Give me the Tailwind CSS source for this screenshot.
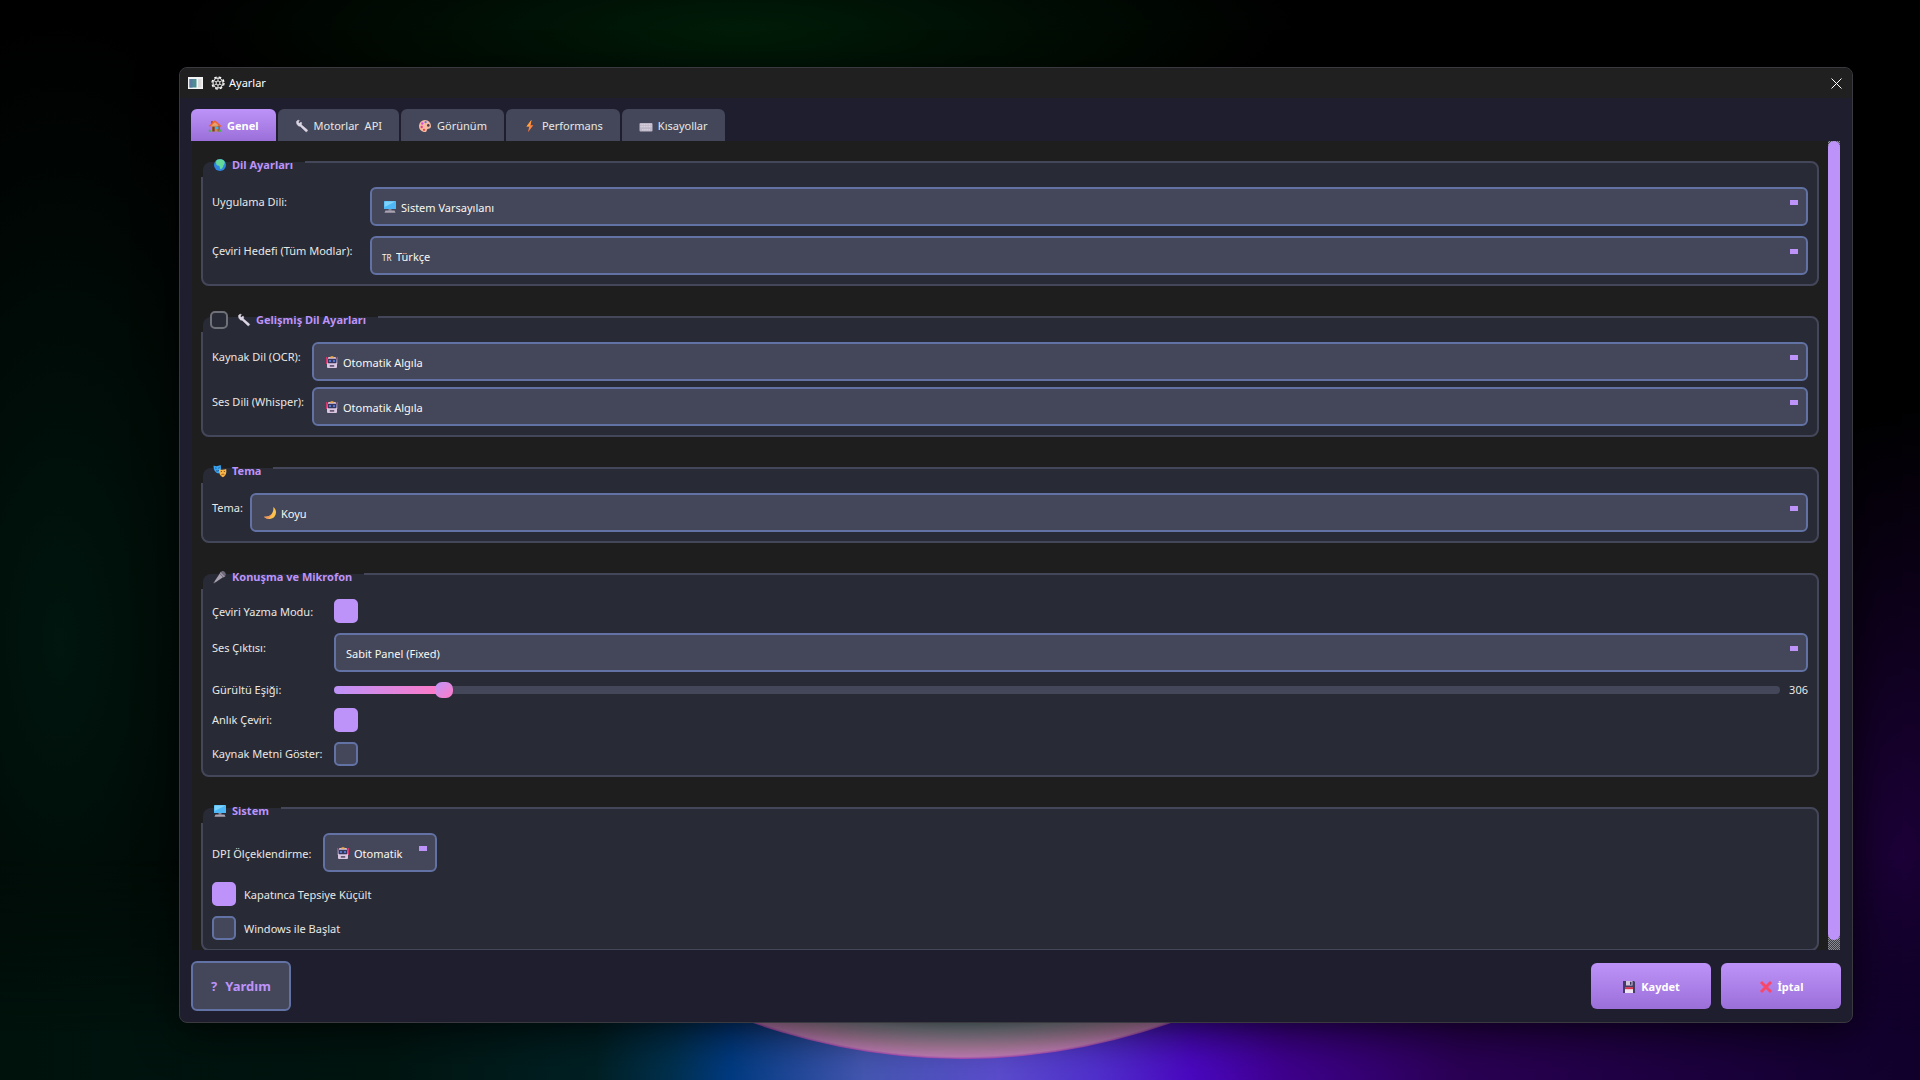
<!DOCTYPE html>
<html lang="tr">
  <head>
    <meta charset="UTF-8" />
    <meta name="viewport" content="width=device-width, initial-scale=1" />
    <title>Ayarlar</title>
    <script src="https://cdn.jsdelivr.net/npm/@tailwindcss/browser@4"></script>
  </head>
  <body
    class="relative h-screen overflow-hidden bg-black pt-[67px] pr-[67px] pb-[57px] pl-[179px] font-['Noto_Sans','Open_Sans',sans-serif] text-[11px] text-[#e8e8e4]"
  >
    <!-- Desktop wallpaper -->
    <svg
      class="absolute inset-0 h-full w-full"
      viewBox="0 0 1920 1080"
      preserveAspectRatio="xMidYMid slice"
      aria-hidden="true"
    >
      <defs>
        <radialGradient id="green"><stop offset="0" stop-color="#00160e" /><stop offset="1" stop-color="#00160e" stop-opacity="0" /></radialGradient>
        <radialGradient id="topGreen"><stop offset="0" stop-color="#001c08" /><stop offset="1" stop-color="#001c08" stop-opacity="0" /></radialGradient>
        <radialGradient id="purple"><stop offset="0" stop-color="#1c0038" /><stop offset="1" stop-color="#1c0038" stop-opacity="0" /></radialGradient>
        <linearGradient id="floor" x1="0" x2="1" y1="0" y2="0">
          <stop offset="0" stop-color="#00120c" />
          <stop offset="0.2" stop-color="#001510" />
          <stop offset="0.31" stop-color="#002024" />
          <stop offset="0.35" stop-color="#00304e" />
          <stop offset="0.38" stop-color="#003a80" />
          <stop offset="0.45" stop-color="#4456b0" />
          <stop offset="0.52" stop-color="#5a4ccc" />
          <stop offset="0.57" stop-color="#5030cc" />
          <stop offset="0.62" stop-color="#4a08c0" />
          <stop offset="0.67" stop-color="#3e008c" />
          <stop offset="0.76" stop-color="#2a0054" />
          <stop offset="0.88" stop-color="#1c003e" />
          <stop offset="1" stop-color="#10002a" />
        </linearGradient>
        <linearGradient id="floorFade" x1="0" x2="0" y1="0" y2="1">
          <stop offset="0" stop-color="#000" />
          <stop offset="0.8" stop-color="#fff" />
        </linearGradient>
        <mask id="floorMask"><rect y="860" width="1920" height="220" fill="url(#floorFade)" /></mask>
        <radialGradient id="planet" gradientUnits="userSpaceOnUse" cx="962" cy="433" r="626">
          <stop offset="0.93" stop-color="#5c7c7c" />
          <stop offset="0.955" stop-color="#8c8c98" />
          <stop offset="0.98" stop-color="#b284a4" />
          <stop offset="0.996" stop-color="#c480b8" />
          <stop offset="1" stop-color="#a848b8" />
        </radialGradient>
      </defs>
      <ellipse cx="60" cy="640" rx="260" ry="620" fill="url(#green)" />
      <ellipse cx="740" cy="30" rx="560" ry="120" fill="url(#topGreen)" />
      <ellipse cx="1900" cy="860" rx="220" ry="460" fill="url(#purple)" />
      <rect y="860" width="1920" height="220" fill="url(#floor)" mask="url(#floorMask)" />
      <path d="M336 433a626 626 0 0 0 1252 0z" fill="url(#planet)" />
    </svg>

    <!-- Shared icons -->
    <svg class="hidden" aria-hidden="true">
      <symbol id="i-house" viewBox="0 0 14 14">
        <path d="M3 6h8.5v6.5H3z" fill="#c98a5a" /><path d="M9.5 6h2.5v6.5H9.5z" fill="#9a6240" />
        <path d="M3 2h2v4H3z" fill="#b0522f" />
        <path d="M7 1.2 13.3 7l-1 1L7 3.4 1.7 8l-1-1z" fill="#f2612e" /><path d="M7 3.2 11 6.7H3z" fill="#e9a06a" />
        <path d="M4.3 7.8h2.4v4.7H4.3z" fill="#7a3e28" /><path d="M8 7.8h2.3V10H8z" fill="#35b5f0" />
        <path d="M.8 10.8c1-.8 2 0 2.2 1.9H.8zM10.7 12.7c.2-2 1.6-2.6 2.5-1.7v1.7z" fill="#3fb54a" />
      </symbol>
      <symbol id="i-wrench" viewBox="0 0 14 14">
        <path d="M1.500 3.800C1 1.800 3 .800 4.300 1.400L3.300 3.200l1.200 1 1.600-1.100c.9 1.100.6 2.200.3 2.700l5.900 5c.9.800-.6 2.600-1.600 1.700L5.100 7.200C3.300 7.600 1.800 5.600 1.500 3.800z" fill="#dcd6e4" stroke="#dcd6e4" stroke-width=".5" />
      </symbol>
      <symbol id="i-palette" viewBox="0 0 14 14">
        <path d="M7 1a6 6 0 0 0-6 6c0 3.500 2.700 6 6 6 2 0 1.500-2 2.300-2.800.9-.8 3.700.2 3.700-3.200a6 6 0 0 0-6-6z" fill="#f7b9a0" />
        <circle cx="3.700" cy="8" r="1.200" fill="#e0418a" /><circle cx="4.300" cy="4.500" r="1.200" fill="#d84fe0" />
        <circle cx="7.600" cy="3.200" r="1.100" fill="#4f7bf0" /><circle cx="6" cy="10.800" r="1.100" fill="#e8453c" />
        <circle cx="10.300" cy="6.400" r="1.300" fill="#4a3a4c" />
      </symbol>
      <symbol id="i-bolt" viewBox="0 0 14 14">
        <path d="M8.600.800 3.500 7.600h2.700L5 13.300l5.300-7.100H7.600z" fill="#ff7f3d" /><path d="M8.600.800 3.500 7.600h2.700l.7-1.400z" fill="#ffa53b" />
      </symbol>
      <symbol id="i-keyboard" viewBox="0 0 14 14">
        <rect x=".5" y="4" width="13" height="8.500" rx="1" fill="#bdb6c6" />
        <path d="M1.500 5.700h11M1.500 7.700h11M3 10.800h8" stroke="#e0dae6" stroke-width="1" stroke-dasharray="1.200 .5" />
      </symbol>
      <symbol id="i-globe" viewBox="0 0 14 14">
        <circle cx="7" cy="7" r="6" fill="#2f86e0" />
        <path d="M4 1.800C6 .800 9 .900 10.800 2.400c1 1.500 1.400 2.800.2 4-.7.700-.5 1.700-1.100 2.700-.6 1.200-1.600 2.300-2.400 2-1-.4-.5-2.200-1.100-3C5.600 7.300 4 7.600 3.400 6.400c-.6-1.300-.6-3.400.6-4.600z" fill="#62d89a" />
      </symbol>
      <symbol id="i-monitor" viewBox="0 0 14 14">
        <rect x="1" y="1" width="12" height="8" rx=".6" fill="#4db8f5" /><path d="M1.600 1.600h10.800L1.600 7z" fill="#7fd3fb" />
        <path d="M5.500 9h3v1.700h-3z" fill="#8a8394" /><path d="M2.500 10.500h9l1 2.200h-11z" fill="#a9a2b2" />
      </symbol>
      <symbol id="i-robot" viewBox="0 0 14 14">
        <path d="M1.600 2v7M12.400 2v7" stroke="#d8356c" stroke-width="1.200" />
        <path d="M3.500 2h7l1.500 3.300V12a1 1 0 0 1-1 1H3a1 1 0 0 1-1-1V5.300z" fill="#d9c6e0" />
        <path d="M4.500 2.800C4.800.6 9.200.6 9.500 2.800z" fill="#f0a63c" />
        <rect x="2.500" y="3.700" width="9" height="4.600" rx="1" fill="#37365c" />
        <circle cx="5" cy="6" r="1" fill="#5d8df0" /><circle cx="9" cy="6" r="1" fill="#5d8df0" />
        <path d="M4.800 10.200h4.400v1.400H4.800z" fill="#4b3c5a" />
      </symbol>
      <symbol id="i-masks" viewBox="0 0 14 14">
        <path d="M.6 1.600c2.300.9 4.700.7 7-.6.8 3.500.6 7-2.400 8.600C2 8.800.4 5.400.600 1.600z" fill="#3aa5f2" />
        <path d="m2.200 4 1.300.3M5.300 4.200l1.200-.6M3 6.600c1 .7 2 .5 3-.4" stroke="#1a4f86" stroke-width=".9" fill="none" />
        <path d="M6.200 5.200c2.400.9 4.700.8 7-.2.7 3.800-.3 6.800-3.300 8.300-3-1.300-4.300-4.300-3.700-8.100z" fill="#f7b548" />
        <path d="m7.700 7.700 1.300-.3M10.800 7.400l1.300.2M8.300 11c.9-1 2.200-1 3.100-.2" stroke="#8a4b1c" stroke-width=".9" fill="none" />
      </symbol>
      <symbol id="i-moon" viewBox="0 0 14 14">
        <path d="M10.200 1c3 2 3.700 6.200 1.600 9.200-2.400 3.300-7.600 3.700-10.800.500 3.300.3 6.300-.7 7.800-2.900C10.200 5.700 10.700 3.300 10.200 1z" fill="#fbc24e" />
        <path d="M1 10.700c3.300.3 6.300-.7 7.800-2.900-.8 2.700-2.500 4.300-4 4.800-1.300-.3-2.700-.8-3.800-1.900z" fill="#f3925a" />
      </symbol>
      <symbol id="i-mic" viewBox="0 0 14 14">
        <path d="M8 1.500 12.500 6l-2 1.500-4-4z" fill="#9b93a3" /><path d="M8.800 1.200c1.600-1 4.700 1.700 3.900 3.900L11.500 6 8 2.600z" fill="#6e6878" />
        <path d="M6.600 3.800 10 7.200 2.300 12.600 1.300 11.700z" fill="#a8a1b0" /><path d="m1.800 12.100-1.100 1" stroke="#7d7686" stroke-width="1.100" />
      </symbol>
      <symbol id="i-floppy" viewBox="0 0 14 14">
        <path d="M1 1h11l1 1v11H1z" fill="#443a66" /><path d="M4 1h6.500v4.500H4z" fill="#cfc6dc" /><path d="M8 1.700h1.500v3H8z" fill="#3a3158" />
        <path d="M3 7.500h8V13H3z" fill="#efe6f4" /><path d="M3 7.200h8v2H3z" fill="#d8344c" />
      </symbol>
      <symbol id="i-cross" viewBox="0 0 14 14">
        <path d="m2 2 10 10M12 2 2 12" stroke="#f8486a" stroke-width="3" />
      </symbol>
    </svg>

    <div
      class="relative flex h-full flex-col overflow-hidden rounded-lg border border-[#39393f] bg-[#1e1e2e] shadow-[0_12px_40px_rgba(0,0,0,0.6)]"
    >
      <header class="flex h-[30px] shrink-0 items-center bg-[#202020] pr-[10px] pl-2 text-white">
        <svg class="h-3 w-[15px]" viewBox="0 0 15 12" aria-hidden="true">
          <rect width="15" height="12" fill="#f4f4f4" />
          <rect x="1.500" y="2" width="7" height="8.500" fill="#4d8f90" /><path d="M1.500 2h3v8.500h-3z" fill="#5b78a0" />
          <rect x="10" y="2" width="3.500" height="8.500" fill="#dcdcdc" />
        </svg>
        <svg class="ml-2 h-[14px] w-[14px]" viewBox="0 0 14 14" fill="none" stroke="#fff" aria-hidden="true">
          <circle cx="7" cy="7" r="5" />
          <circle cx="7" cy="7" r="2" stroke-width=".9" />
          <circle cx="7" cy="7" r="6" stroke-width="1.300" stroke-dasharray="2.600 2.112" />
          <path d="M7 2v3M7 9v3M2.700 4.500l2.600 1.500M8.700 8l2.600 1.500M11.300 4.500 8.700 6M5.300 8 2.700 9.500" stroke-width=".8" />
        </svg>
        <h1 class="ml-1">Ayarlar</h1>
        <button type="button" class="ml-auto" aria-label="Kapat">
          <svg class="h-[11px] w-[11px]" viewBox="0 0 11 11" stroke="#fff"><path d="m.5.5 10 10M10.500.5l-10 10" /></svg>
        </button>
      </header>

      <nav class="flex shrink-0 gap-[2px] px-[11px] pt-[11px]">
        <button type="button" class="flex h-8 items-center gap-[5px] rounded-t-md bg-linear-to-b from-[#bd93f9] to-[#9b6fd8] px-[17px] pt-[2px] font-bold text-white">
          <svg class="h-[14px] w-[14px]"><use href="#i-house" /></svg>Genel
        </button>
        <button type="button" class="flex h-8 items-center gap-[5px] rounded-t-md bg-[#44475a] px-[17px] pt-[2px] whitespace-pre">
          <svg class="h-[14px] w-[14px]"><use href="#i-wrench" /></svg>Motorlar  API</button>
        <button type="button" class="flex h-8 items-center gap-[5px] rounded-t-md bg-[#44475a] px-[17px] pt-[2px]">
          <svg class="h-[14px] w-[14px]"><use href="#i-palette" /></svg>Görünüm
        </button>
        <button type="button" class="flex h-8 items-center gap-[5px] rounded-t-md bg-[#44475a] px-[17px] pt-[2px]">
          <svg class="h-[14px] w-[14px]"><use href="#i-bolt" /></svg>Performans
        </button>
        <button type="button" class="flex h-8 items-center gap-[5px] rounded-t-md bg-[#44475a] px-[17px] pt-[2px]">
          <svg class="h-[14px] w-[14px]"><use href="#i-keyboard" /></svg>Kısayollar
        </button>
      </nav>

      <main class="mx-3 flex min-h-0 flex-1 overflow-hidden bg-[#1e1e1e]">
        <div class="flex flex-1 flex-col gap-[30px] px-[9px] pt-[20px]">
          <!-- Dil Ayarları -->
          <section class="shrink-0 rounded-lg border-2 border-[#44475a] bg-[#282a36] px-[9px] pb-[9px]">
            <h2 class="-mt-[2px] -ml-[11px] h-4 w-fit bg-[#1e1e1e] pt-px pl-[2px] font-bold text-[#bd93f9]">
              <span class="flex h-[15px] items-start rounded-tl-lg bg-[#282a36] pr-3 pl-[10px]">
                <span class="flex h-[6px] items-center gap-[5px]">
                  <svg class="h-[14px] w-[14px]"><use href="#i-globe" /></svg>Dil Ayarları
                </span>
              </span>
            </h2>
            <div class="mt-[10px] grid grid-cols-[158px_1fr] gap-y-[10px]">
              <label for="appLang" class="leading-[30px]">Uygulama Dili:</label>
              <div class="relative">
                <select id="appLang" class="h-[39px] w-full appearance-none rounded-md border-2 border-[#6272a4] bg-[#44475a] pt-[3px] pl-[29px] text-[#f8f8f2]">
                  <option>Sistem Varsayılanı</option>
                </select>
                <svg class="pointer-events-none absolute top-[13px] left-[13px] h-[14px] w-[14px]"><use href="#i-monitor" /></svg>
                <span class="pointer-events-none absolute top-[13px] right-[10px] h-[5px] w-2 bg-[#bd93f9]"></span>
              </div>
              <label for="targetLang" class="leading-[30px]">Çeviri Hedefi (Tüm Modlar):</label>
              <div class="relative">
                <select id="targetLang" class="h-[39px] w-full appearance-none rounded-md border-2 border-[#6272a4] bg-[#44475a] pt-[3px] pl-6 text-[#f8f8f2]">
                  <option>Türkçe</option>
                </select>
                <span class="pointer-events-none absolute top-[14px] left-3 text-[8px] leading-[15px] text-[#f8f8f2]">TR</span>
                <span class="pointer-events-none absolute top-[13px] right-[10px] h-[5px] w-2 bg-[#bd93f9]"></span>
              </div>
            </div>
          </section>

          <!-- Gelişmiş Dil Ayarları -->
          <section class="shrink-0 rounded-lg border-2 border-[#44475a] bg-[#282a36] px-[9px] pb-[9px]">
            <h2 class="-mt-[2px] -ml-[11px] h-4 w-fit bg-[#1e1e1e] pt-px pl-[2px] font-bold text-[#bd93f9]">
              <span class="flex h-[15px] items-start rounded-tl-lg bg-[#282a36] pr-3 pl-[7px]">
                <label class="flex h-[6px] items-center gap-[5px]">
                  <input type="checkbox" class="mr-1 h-[18px] w-[18px] appearance-none rounded-[5px] border-2 border-[#707078] bg-[#282a36] checked:bg-[#bd93f9]" />
                  <svg class="h-[14px] w-[14px]"><use href="#i-wrench" /></svg>Gelişmiş Dil Ayarları
                </label>
              </span>
            </h2>
            <div class="mt-[10px] grid grid-cols-[100px_1fr] gap-y-[6px]">
              <label for="ocrLang" class="leading-[30px]">Kaynak Dil (OCR):</label>
              <div class="relative">
                <select id="ocrLang" class="h-[39px] w-full appearance-none rounded-md border-2 border-[#6272a4] bg-[#44475a] pt-[3px] pl-[29px] text-[#f8f8f2]">
                  <option>Otomatik Algıla</option>
                </select>
                <svg class="pointer-events-none absolute top-[13px] left-[13px] h-[14px] w-[14px]"><use href="#i-robot" /></svg>
                <span class="pointer-events-none absolute top-[13px] right-[10px] h-[5px] w-2 bg-[#bd93f9]"></span>
              </div>
              <label for="voiceLang" class="leading-[30px]">Ses Dili (Whisper):</label>
              <div class="relative">
                <select id="voiceLang" class="h-[39px] w-full appearance-none rounded-md border-2 border-[#6272a4] bg-[#44475a] pt-[3px] pl-[29px] text-[#f8f8f2]">
                  <option>Otomatik Algıla</option>
                </select>
                <svg class="pointer-events-none absolute top-[13px] left-[13px] h-[14px] w-[14px]"><use href="#i-robot" /></svg>
                <span class="pointer-events-none absolute top-[13px] right-[10px] h-[5px] w-2 bg-[#bd93f9]"></span>
              </div>
            </div>
          </section>

          <!-- Tema -->
          <section class="shrink-0 rounded-lg border-2 border-[#44475a] bg-[#282a36] px-[9px] pb-[9px]">
            <h2 class="-mt-[2px] -ml-[11px] h-4 w-fit bg-[#1e1e1e] pt-px pl-[2px] font-bold text-[#bd93f9]">
              <span class="flex h-[15px] items-start rounded-tl-lg bg-[#282a36] pr-3 pl-[10px]">
                <span class="flex h-[6px] items-center gap-[5px]">
                  <svg class="h-[14px] w-[14px]"><use href="#i-masks" /></svg>Tema
                </span>
              </span>
            </h2>
            <div class="mt-[10px] grid grid-cols-[38px_1fr]">
              <label for="theme" class="leading-[30px]">Tema:</label>
              <div class="relative">
                <select id="theme" class="h-[39px] w-full appearance-none rounded-md border-2 border-[#6272a4] bg-[#44475a] pt-[3px] pl-[29px] text-[#f8f8f2]">
                  <option>Koyu</option>
                </select>
                <svg class="pointer-events-none absolute top-[13px] left-[13px] h-[14px] w-[14px]"><use href="#i-moon" /></svg>
                <span class="pointer-events-none absolute top-[13px] right-[10px] h-[5px] w-2 bg-[#bd93f9]"></span>
              </div>
            </div>
          </section>

          <!-- Konuşma ve Mikrofon -->
          <section class="shrink-0 rounded-lg border-2 border-[#44475a] bg-[#282a36] px-[9px] pb-[9px]">
            <h2 class="-mt-[2px] -ml-[11px] h-4 w-fit bg-[#1e1e1e] pt-px pl-[2px] font-bold text-[#bd93f9]">
              <span class="flex h-[15px] items-start rounded-tl-lg bg-[#282a36] pr-3 pl-[10px]">
                <span class="flex h-[6px] items-center gap-[5px]">
                  <svg class="h-[14px] w-[14px]"><use href="#i-mic" /></svg>Konuşma ve Mikrofon
                </span>
              </span>
            </h2>
            <div class="mt-[10px] grid grid-cols-[122px_1fr] gap-y-[10px]">
              <label for="writeMode" class="leading-[26px]">Çeviri Yazma Modu:</label>
              <input id="writeMode" type="checkbox" checked class="h-6 w-6 appearance-none rounded-[5px] border-2 border-[#6272a4] bg-[#44475a] checked:border-[#bd93f9] checked:bg-[#bd93f9]" />
              <label for="output" class="-mt-[2px] leading-[30px]">Ses Çıktısı:</label>
              <div class="relative -mt-[2px]">
                <select id="output" class="h-[39px] w-full appearance-none rounded-md border-2 border-[#6272a4] bg-[#44475a] pt-[3px] pl-[10px] text-[#f8f8f2]">
                  <option>Sabit Panel (Fixed)</option>
                </select>
                <span class="pointer-events-none absolute top-[13px] right-[10px] h-[5px] w-2 bg-[#bd93f9]"></span>
              </div>
              <label for="noise" class="leading-4">Gürültü Eşiği:</label>
              <div class="flex h-4 items-center">
                <input
                  id="noise"
                  type="range"
                  min="100"
                  max="3000"
                  value="306"
                  class="h-2 flex-1 appearance-none rounded bg-[linear-gradient(to_right,#bd93f9_0,#ff79c6_7.6%,#44475a_7.6%)] [&::-webkit-slider-thumb]:h-4 [&::-webkit-slider-thumb]:w-[18px] [&::-webkit-slider-thumb]:appearance-none [&::-webkit-slider-thumb]:rounded-[7px] [&::-webkit-slider-thumb]:bg-linear-to-br [&::-webkit-slider-thumb]:from-[#bd93f9] [&::-webkit-slider-thumb]:to-[#ff79c6]"
                />
                <output for="noise" id="noiseValue" class="w-7 text-right">306</output>
              </div>
              <label for="instant" class="leading-6">Anlık Çeviri:</label>
              <input id="instant" type="checkbox" checked class="h-6 w-6 appearance-none rounded-[5px] border-2 border-[#6272a4] bg-[#44475a] checked:border-[#bd93f9] checked:bg-[#bd93f9]" />
              <label for="showSource" class="leading-6">Kaynak Metni Göster:</label>
              <input id="showSource" type="checkbox" class="h-6 w-6 appearance-none rounded-[5px] border-2 border-[#6272a4] bg-[#44475a] checked:border-[#bd93f9] checked:bg-[#bd93f9]" />
            </div>
          </section>

          <!-- Sistem -->
          <section class="shrink-0 rounded-lg border-2 border-[#44475a] bg-[#282a36] px-[9px] pb-[9px]">
            <h2 class="-mt-[2px] -ml-[11px] h-4 w-fit bg-[#1e1e1e] pt-px pl-[2px] font-bold text-[#bd93f9]">
              <span class="flex h-[15px] items-start rounded-tl-lg bg-[#282a36] pr-3 pl-[10px]">
                <span class="flex h-[6px] items-center gap-[5px]">
                  <svg class="h-[14px] w-[14px]"><use href="#i-monitor" /></svg>Sistem
                </span>
              </span>
            </h2>
            <div class="mt-[10px] flex flex-col gap-[10px]">
              <div class="flex items-center">
                <label for="dpi" class="w-[111px] pt-[3px]">DPI Ölçeklendirme:</label>
                <div class="relative">
                  <select id="dpi" class="h-[39px] w-[114px] appearance-none rounded-md border-2 border-[#6272a4] bg-[#44475a] pt-[3px] pl-[29px] text-[#f8f8f2]">
                    <option>Otomatik</option>
                  </select>
                  <svg class="pointer-events-none absolute top-[13px] left-[13px] h-[14px] w-[14px]"><use href="#i-robot" /></svg>
                  <span class="pointer-events-none absolute top-[13px] right-[10px] h-[5px] w-2 bg-[#bd93f9]"></span>
                </div>
              </div>
              <label class="flex w-fit items-center gap-2">
                <input type="checkbox" checked class="h-6 w-6 appearance-none rounded-[5px] border-2 border-[#6272a4] bg-[#44475a] checked:border-[#bd93f9] checked:bg-[#bd93f9]" />
                <span class="pt-[2px]">Kapatınca Tepsiye Küçült</span>
              </label>
              <label class="flex w-fit items-center gap-2">
                <input type="checkbox" class="h-6 w-6 appearance-none rounded-[5px] border-2 border-[#6272a4] bg-[#44475a] checked:border-[#bd93f9] checked:bg-[#bd93f9]" />
                <span class="pt-[2px]">Windows ile Başlat</span>
              </label>
            </div>
          </section>
        </div>

        <!-- Scrollbar -->
        <div class="flex w-3 shrink-0 flex-col bg-[repeating-conic-gradient(#8a8a92_0_25%,#3c3c44_0_50%)] bg-size-[2px_2px] pb-[10px]">
          <div class="flex-1 rounded-md bg-[#bd93f9]"></div>
        </div>
      </main>

      <footer class="flex shrink-0 items-center gap-[10px] p-[11px]">
        <button type="button" class="mr-auto flex h-[50px] w-[100px] items-center justify-center gap-2 rounded-md border-2 border-[#6272a4] bg-[#44475a] pt-[2px] text-[13px] font-bold text-[#bd93f9]">
          <span>?</span>Yardım
        </button>
        <button type="button" class="flex h-[46px] w-[120px] items-center justify-center gap-[5px] rounded-md bg-linear-to-b from-[#bd93f9] to-[#9b6fd8] pt-[2px] font-bold text-white">
          <svg class="h-[14px] w-[14px]"><use href="#i-floppy" /></svg>Kaydet
        </button>
        <button type="button" class="flex h-[46px] w-[120px] items-center justify-center gap-[5px] rounded-md bg-linear-to-b from-[#bd93f9] to-[#9b6fd8] pt-[2px] font-bold text-white">
          <svg class="h-[14px] w-[14px]"><use href="#i-cross" /></svg>İptal
        </button>
      </footer>
    </div>

    <script>
      const noise = document.getElementById("noise");
      const noiseValue = document.getElementById("noiseValue");

      noise.addEventListener("input", () => {
        noiseValue.textContent = noise.value;
      });
    </script>
  </body>
</html>
